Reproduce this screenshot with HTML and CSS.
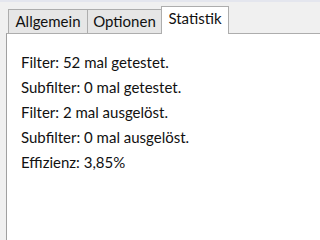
FILE: index.html
```html
<!DOCTYPE html>
<html>
<head>
<meta charset="utf-8">
<link rel="stylesheet" href="styles.css">
</head>
<body>
<div class="window">
  <div class="topband"></div>
  <div class="tabs">
    <div class="tab tab-a">Allgemein</div>
    <div class="tab tab-b">Optionen</div>
    <div class="tab tab-c active">Statistik</div>
  </div>
  <div class="panel">
    <p class="line">Filter: 52 mal getestet.</p>
    <p class="line">Subfilter: 0 mal getestet.</p>
    <p class="line">Filter: 2 mal ausgelöst.</p>
    <p class="line">Subfilter: 0 mal ausgelöst.</p>
    <p class="line">Effizienz: 3,85%</p>
  </div>
</div>
</body>
</html>
```
FILE: styles.css
```css
html, body {
  margin: 0;
  padding: 0;
  height: 100%;
  background: #f0f0f0;
  overflow: hidden;
}
.window {
  display: flex;
  flex-direction: column;
  min-height: 100%;
  font-family: Lato, "Liberation Sans", sans-serif;
  color: #111111;
}
.topband {
  height: 2px;
  background: #e4e6ee;
}
.tabs {
  display: flex;
  align-items: flex-end;
  height: 31px;
  padding-left: 8px;
  position: relative;
  z-index: 2;
}
.tab {
  box-sizing: border-box;
  height: 24px;
  border: 1px solid #adadad;
  border-bottom: none;
  background: #e6e6e6;
  font-size: 15px;
  line-height: 23px;
  text-align: center;
  margin-left: -1px;
}
.tab-a { width: 80px; margin-left: 0; }
.tab-b { width: 75px; }
.tab-c { width: 68px; }
.tab.active {
  height: 28px;
  background: #ffffff;
  line-height: 23px;
  margin-bottom: -1px;
}
.panel {
  flex: 1;
  margin-left: 6px;
  background: #ffffff;
  border-top: 1px solid #adadad;
  border-left: 1px solid #a0a0a0;
  padding: 16px 0 0 14px;
}
.line {
  margin: 0;
  font-size: 15px;
  line-height: 25px;
}
```
